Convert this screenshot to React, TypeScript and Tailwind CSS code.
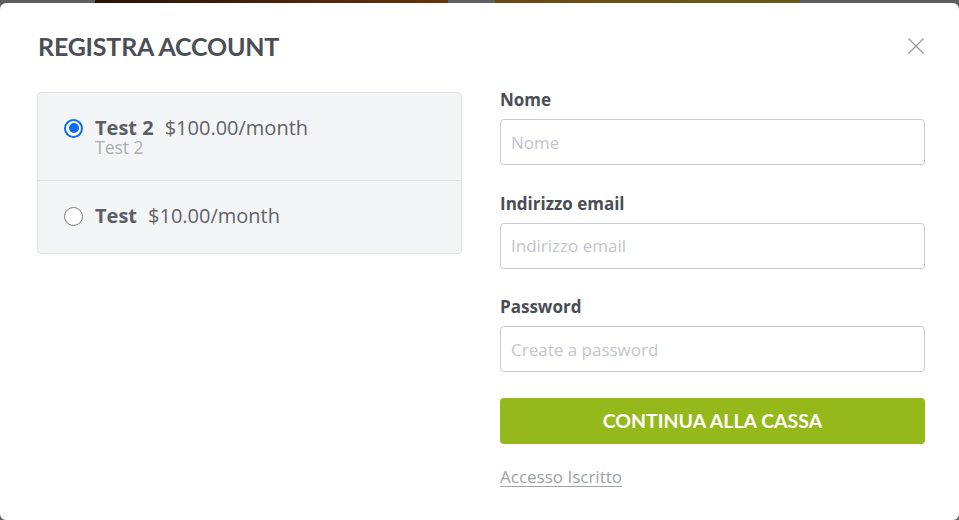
import { useState } from "react";

const plans = [
  { id: "test2", name: "Test 2", price: "$100.00/month", note: "Test 2" },
  { id: "test", name: "Test", price: "$10.00/month", note: "" },
];

function Radio({ checked }: { checked: boolean }) {
  return checked ? (
    <span className="flex h-[19px] w-[19px] shrink-0 items-center justify-center rounded-full border-[2px] border-[#0b6cf3] bg-white">
      <span className="h-[10px] w-[10px] rounded-full bg-[#0b6cf3]" />
    </span>
  ) : (
    <span className="h-[19px] w-[19px] shrink-0 rounded-full border-[1.5px] border-[#777a7f] bg-white" />
  );
}

function Field({ label, placeholder, type = "text" }: { label: string; placeholder: string; type?: string }) {
  return (
    <div className="mb-[26.5px] flex flex-col">
      <label className="mb-[7px] text-[17px] leading-[24px] font-bold text-[#4a4e54]">{label}</label>
      <input
        type={type}
        placeholder={placeholder}
        className="h-[46px] w-full rounded-[4px] border border-[#c8cbd0] bg-white px-[10px] text-[17px] text-[#4a4e54] outline-none placeholder:text-[#c3c6cb]"
      />
    </div>
  );
}

export default function App() {
  const [selected, setSelected] = useState("test2");

  return (
    <div className="h-[520px] w-[959px] overflow-hidden bg-[#5e5e5e] font-['Open_Sans',sans-serif]">
      {/* page behind the modal */}
      <div className="flex h-[3px]">
        <div className="w-[95px] bg-[#5e5e5e]" />
        <div className="w-[353px] bg-gradient-to-r from-[#2a1206] to-[#6b3208]" />
        <div className="w-[47px] bg-[#606060]" />
        <div className="w-[305px] bg-gradient-to-r from-[#6d4810] to-[#6a5a18]" />
        <div className="flex-1 bg-[#5e5e5e]" />
      </div>

      <div className="h-[517px] rounded-[6px] bg-white pt-[31px] pr-[34px] pl-[37px]">
        <div className="flex items-start justify-between">
          <h2 className="ml-[1px] font-['Lato',sans-serif] text-[25px] leading-[25px] font-bold tracking-[-0.2px] text-[#4b4f55]">
            REGISTRA ACCOUNT
          </h2>
          <button className="mt-[4px] mr-[1px] text-[#9a9a9a]" aria-label="Chiudi">
            <svg width="16" height="16" viewBox="0 0 16 16" fill="none" stroke="currentColor" strokeWidth="1.3">
              <path d="M0.5 0.5 15.5 15.5M15.5 0.5 0.5 15.5" />
            </svg>
          </button>
        </div>

        <div className="mt-[29px] grid grid-cols-[425px_425px] gap-[38px]">
          <div className="mt-[4px] self-start overflow-hidden rounded-[4px] border border-[#dfe1e5] bg-[#f4f5f7]">
            {plans.map((p, i) => (
              <div
                key={p.id}
                onClick={() => setSelected(p.id)}
                className={`flex cursor-pointer items-start gap-[12px] pl-[26px] ${
                  i > 0 ? "border-t border-[#dfe1e5] pt-[24px] pb-[26px]" : "pt-[24px] pb-[24px]"
                }`}
              >
                <span className="flex h-[22px] items-center">
                  <Radio checked={selected === p.id} />
                </span>
                <div className="flex flex-col">
                  <div className="text-[20px] leading-[22px] text-[#5f636a]">
                    <span className="mr-[11px] font-bold text-[#5a5e65]">{p.name}</span>
                    <span>{p.price}</span>
                  </div>
                  {p.note && <div className="text-[17.5px] leading-[17px] text-[#abaeb3]">{p.note}</div>}
                </div>
              </div>
            ))}
          </div>

          <form className="flex flex-col" onSubmit={(e) => e.preventDefault()}>
            <Field label="Nome" placeholder="Nome" />
            <Field label="Indirizzo email" placeholder="Indirizzo email" type="email" />
            <div className="-mb-[1px]">
              <Field label="Password" placeholder="Create a password" type="password" />
            </div>
            <button
              type="submit"
              className="h-[46px] w-full rounded-[4px] bg-[#95b81b] font-['Lato',sans-serif] text-[19.5px] font-bold text-white"
            >
              CONTINUA ALLA CASSA
            </button>
            <a href="#" className="mt-[21px] self-start text-[17px] leading-[24px] text-[#9ea2a8] underline underline-offset-[3px]">
              Accesso Iscritto
            </a>
          </form>
        </div>
      </div>
    </div>
  );
}
